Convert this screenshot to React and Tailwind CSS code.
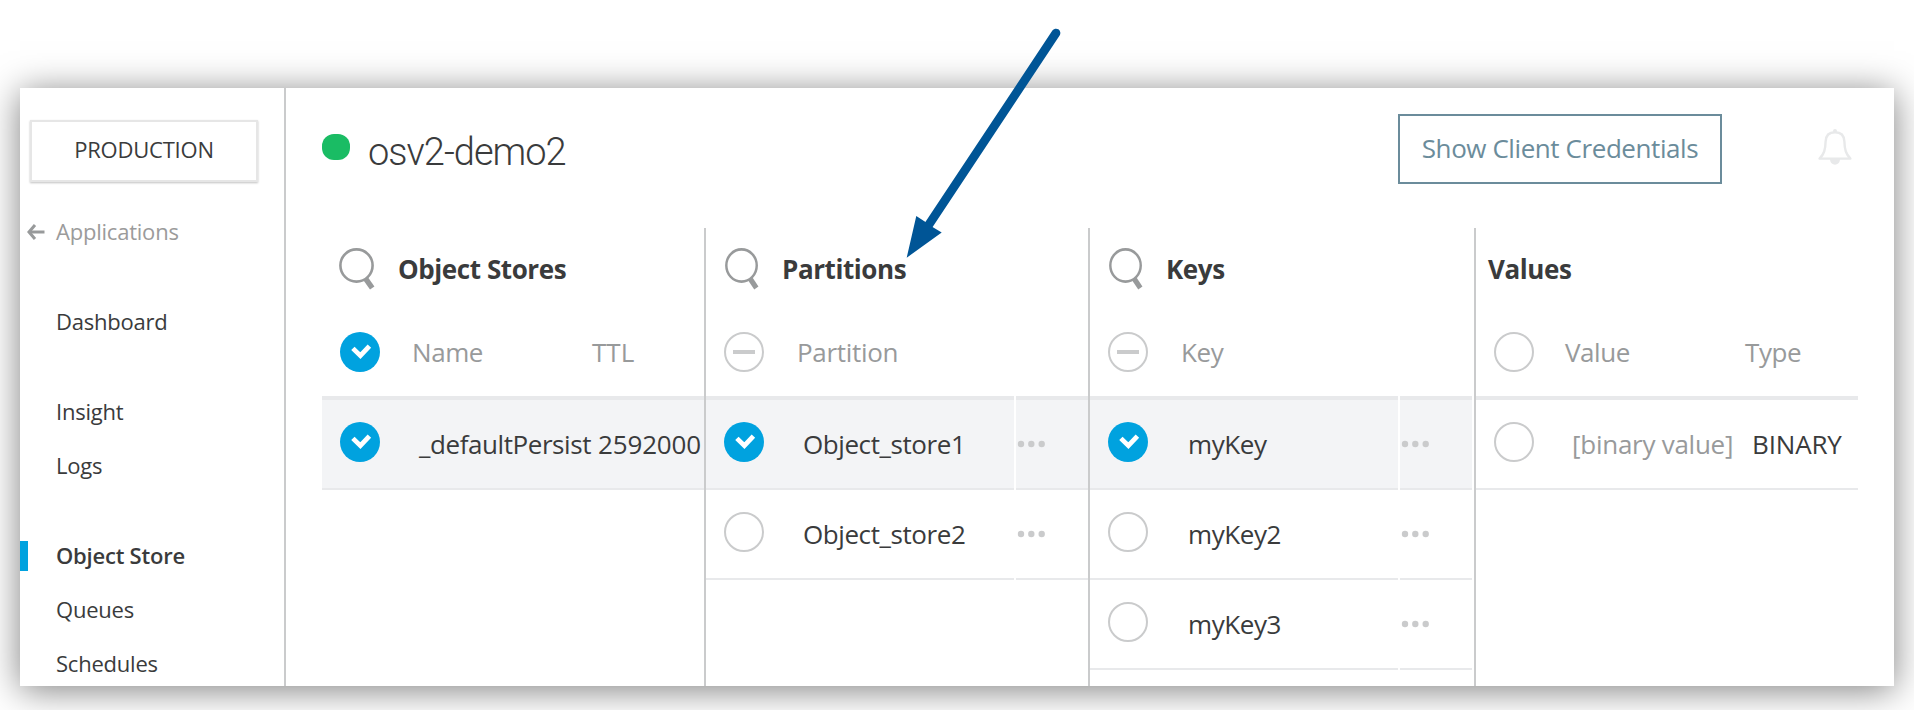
const Check = () => (
  <span className="flex size-10 shrink-0 rounded-full bg-[#00a2df]">
    <svg viewBox="0 0 40 40" className="size-10" fill="none" stroke="#fff" strokeWidth="4.8">
      <path d="M12.9 16.4 L20.4 23.7 L29.4 14.2" />
    </svg>
  </span>
);

const Empty = () => <span className="block size-10 shrink-0 rounded-full border-2 border-[#cacbcc]" />;

const Minus = () => (
  <span className="flex size-10 shrink-0 items-center justify-center rounded-full border-2 border-[#cacbcc]">
    <span className="h-1 w-[22px] bg-[#cacbcc]" />
  </span>
);

const marks = { check: Check, empty: Empty, minus: Minus };

const Search = ({ width }) => (
  <svg viewBox="0 0 36 42" preserveAspectRatio="none" className={"h-[42px] shrink-0 " + width} fill="none" stroke="#989a9b">
    <circle cx="17.5" cy="17.5" r="16.1" strokeWidth="2.6" />
    <path d="M26.6 30.6 L33.2 40" strokeWidth="5.4" />
  </svg>
);

const Dots = () => (
  <svg viewBox="0 0 28 8" className="h-2 w-7" fill="#cacbcc">
    <circle cx="4" cy="4" r="3.2" />
    <circle cx="14.3" cy="4" r="3.2" />
    <circle cx="24.7" cy="4" r="3.2" />
  </svg>
);

function Column({ title, search, mark, heads, rows, menu, className }) {
  return (
    <section className={"flex shrink-0 flex-col " + className}>
      <div className="flex h-[74px] pt-5">
        {search && (
          <div className="w-[76px] shrink-0">
            <Search width={search} />
          </div>
        )}
        <h2 className={"pt-[3px] text-[26px] leading-9 font-bold tracking-[-0.42px] " + (search ? "" : "pl-3")}>{title}</h2>
      </div>
      <div className="flex">
        <div className="flex h-[98px] min-w-0 flex-1 border-b-4 border-[#e8e9eb] pt-[30px] pl-[18px] text-[#989a9b]">
          {mark === "check" ? <Check /> : mark === "minus" ? <Minus /> : <Empty />}
          {heads.map((h) => (
            <span key={h.text} className={"shrink-0 pt-0.5 leading-9 " + h.cls}>{h.text}</span>
          ))}
        </div>
        {menu && <div className="ml-0.5 w-[72px] shrink-0 border-b-4 border-[#e8e9eb]" />}
      </div>
      {rows.map((r) => {
        const Mark = marks[r.mark];
        const bg = r.selected ? "bg-[#f3f4f6]" : "";
        return (
          <div key={r.cells[0].text} className="flex h-[90px] shrink-0">
            <div className={"flex min-w-0 flex-1 border-b-2 border-[#e8e9eb] pt-[22px] pl-[18px] " + bg}>
              <Mark />
              {r.cells.map((c) => (
                <span key={c.text} className={"shrink-0 pt-1 leading-9 whitespace-nowrap " + c.cls}>{c.text}</span>
              ))}
            </div>
            {menu && (
              <div className={"ml-0.5 w-[72px] shrink-0 border-b-2 border-[#e8e9eb] pt-10 pl-px " + bg}>
                <Dots />
              </div>
            )}
          </div>
        );
      })}
    </section>
  );
}

const NavItem = ({ children, className = "" }) => (
  <a className={"flex h-[54px] items-center pl-9 " + className}>{children}</a>
);

export default function App() {
  return (
    <div className="relative h-[710px] w-[1914px] overflow-hidden bg-white px-5 pt-[88px] font-['Open_Sans',sans-serif] text-[#3a3b3c]">
      <div className="flex h-[598px] overflow-hidden bg-white shadow-[0_4px_34px_rgba(0,0,0,0.5)]">
        <aside className="w-[266px] shrink-0 border-r-2 border-[#cacbcc] pt-8 text-[22px] tracking-[-0.22px]">
          <div className="ml-2.5 flex h-[62px] w-[228px] items-center justify-center border-2 border-[#e6e6e6] pb-1 shadow-[0_1px_2px_rgba(0,0,0,0.25)]">
            PRODUCTION
          </div>
          <nav className="pt-[22px]">
            <a className="flex h-[54px] items-center text-[#9b9b9b]">
              <svg viewBox="0 0 18 16" className="mt-0.5 mr-[11px] ml-[7px] h-4 w-[18px]" fill="none" stroke="#989a9b">
                <path d="M2 8 H17.5" strokeWidth="3" />
                <path d="M8 1 L2 8 L8 15" strokeWidth="3" />
              </svg>
              Applications
            </a>
            <NavItem className="mt-9">Dashboard</NavItem>
            <NavItem className="mt-9">Insight</NavItem>
            <NavItem>Logs</NavItem>
            <a className="mt-9 flex h-[54px] items-center font-semibold">
              <span className="mt-0.5 mr-7 h-[30px] w-2 bg-[#00a2df]" />
              Object Store
            </a>
            <NavItem>Queues</NavItem>
            <NavItem>Schedules</NavItem>
          </nav>
        </aside>
        <main className="flex min-w-0 flex-1 flex-col pl-9 text-[26px] tracking-[-0.42px]">
          <header className="flex h-[140px] shrink-0 pt-[26px]">
            <span className="mt-5 mr-[18px] h-[26px] w-7 rounded-[12px] bg-[#1abc64]" />
            <h1 className="pt-[18px] font-[Roboto] text-[38px] leading-10 font-light tracking-[-1px]">osv2-demo2</h1>
            <button className="ml-auto flex h-[70px] w-[324px] items-center justify-center border-2 border-[#6b8c9b] pb-0.5 text-[#6b8c9b]">
              Show Client Credentials
            </button>
            <svg viewBox="0 0 34 36" className="mt-[15px] mr-[42px] ml-24 h-9 w-[34px]" fill="none" stroke="#e8e9ea" strokeWidth="2.4" strokeLinejoin="round">
              <path d="M17 3.2 C10.5 3.2 7.8 7.5 7.6 12.5 C7.4 21 6 25 1.6 29.6 H32.4 C28 25 26.6 21 26.4 12.5 C26.2 7.5 23.5 3.2 17 3.2 Z" />
              <path d="M12 30 H22 C22 37.5 12 37.5 12 30 Z" fill="#e8e9ea" stroke="none" />
              <circle cx="17" cy="2" r="2" fill="#e8e9ea" stroke="none" />
            </svg>
          </header>
          <div className="flex min-h-0 flex-1">
            <Column
              className="w-[382px]"
              title="Object Stores"
              search="ml-[17px] w-[36px]"
              mark="check"
              heads={[{ text: "Name", cls: "ml-8 w-[180px]" }, { text: "TTL", cls: "tracking-normal" }]}
              rows={[
                {
                  mark: "check",
                  selected: true,
                  cells: [
                    { text: "_defaultPersist", cls: "ml-[39px] w-[179px]" },
                    { text: "2592000", cls: "tracking-[-0.15px]" },
                  ],
                },
              ]}
            />
            <Column
              className="w-[384px] border-l-2 border-[#cacbcc]"
              title="Partitions"
              search="ml-[19px] w-[34px]"
              mark="minus"
              menu
              heads={[{ text: "Partition", cls: "ml-[33px] tracking-[-0.3px]" }]}
              rows={[
                { mark: "check", selected: true, cells: [{ text: "Object_store1", cls: "ml-[39px]" }] },
                { mark: "empty", cells: [{ text: "Object_store2", cls: "ml-[39px]" }] },
              ]}
            />
            <Column
              className="mr-0.5 w-[384px] border-l-2 border-[#cacbcc]"
              title="Keys"
              search="ml-[19px] w-[34px]"
              mark="minus"
              menu
              heads={[{ text: "Key", cls: "ml-[33px]" }]}
              rows={[
                { mark: "check", selected: true, cells: [{ text: "myKey", cls: "ml-10" }] },
                { mark: "empty", cells: [{ text: "myKey2", cls: "ml-10" }] },
                { mark: "empty", cells: [{ text: "myKey3", cls: "ml-10" }] },
              ]}
            />
            <Column
              className="w-[384px] border-l-2 border-[#cacbcc]"
              title="Values"
              mark="empty"
              heads={[{ text: "Value", cls: "ml-[31px] w-[180px]" }, { text: "Type", cls: "" }]}
              rows={[
                {
                  mark: "empty",
                  cells: [
                    { text: "[binary value]", cls: "ml-[38px] w-[180px] tracking-[-0.26px] text-[#989a9b]" },
                    { text: "BINARY", cls: "tracking-[-0.15px]" },
                  ],
                },
              ]}
            />
          </div>
        </main>
      </div>
      <svg viewBox="0 0 160 240" className="absolute top-[25px] left-[904px] h-[240px] w-[160px]">
        <path d="M152 8 L24 201" stroke="#005596" strokeWidth="8.7" strokeLinecap="round" />
        <path d="M2.7 232.7 L12.3 191 L21.5 197 L28.5 202 L37.7 207.5 Z" fill="#005596" />
      </svg>
    </div>
  );
}
